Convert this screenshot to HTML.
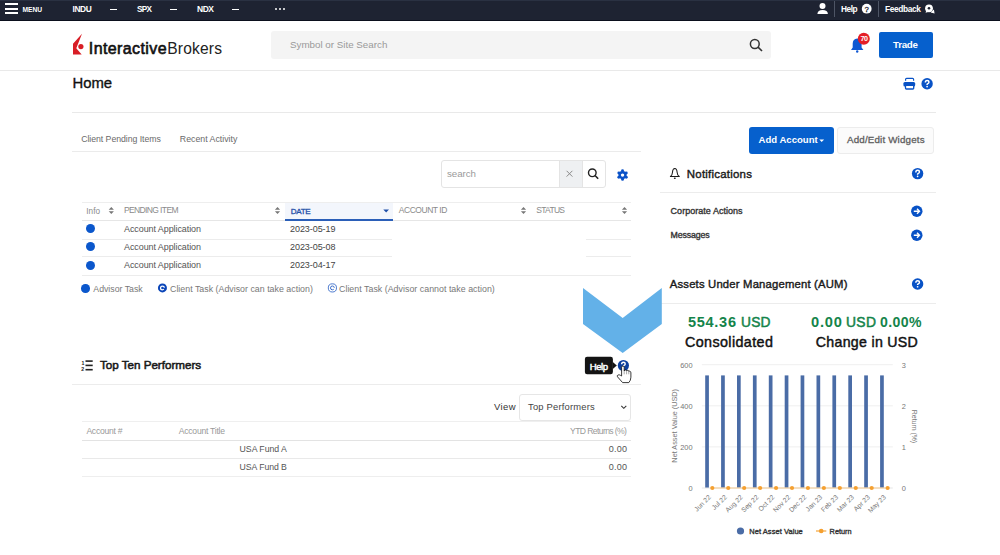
<!DOCTYPE html>
<html><head><meta charset="utf-8"><style>
html,body{margin:0;padding:0;background:#fff;width:1000px;height:555px;overflow:hidden;position:relative;font-family:"Liberation Sans",sans-serif;}
.t{position:absolute;white-space:nowrap;}
svg{position:absolute;overflow:visible;}
</style></head><body>
<div style="position:absolute;left:0px;top:0px;width:1000.00px;height:20.70px;background:#1e2332;border-top:1px solid #2a3142;border-bottom:1px solid #0b0f1d;box-sizing:border-box"></div>
<div style="position:absolute;left:4.5px;top:3.3px;width:13.50px;height:2.00px;background:#fff"></div>
<div style="position:absolute;left:4.5px;top:7.8px;width:13.50px;height:2.00px;background:#fff"></div>
<div style="position:absolute;left:4.5px;top:12.3px;width:13.50px;height:2.00px;background:#fff"></div>
<div class="t" style="top:7px;left:22.50px;font-size:6.70px;line-height:6.70px;letter-spacing:-0.077px;font-weight:700;color:#fff;">MENU</div>
<div class="t" style="top:5px;left:72.50px;font-size:8.39px;line-height:8.39px;letter-spacing:-0.405px;font-weight:700;color:#fff;">INDU</div>
<div style="position:absolute;left:110px;top:8.5px;width:7.00px;height:1.30px;background:#fff"></div>
<div style="position:absolute;left:170px;top:8.5px;width:7.00px;height:1.30px;background:#fff"></div>
<div style="position:absolute;left:232px;top:8.5px;width:7.00px;height:1.30px;background:#fff"></div>
<div class="t" style="top:6px;left:137.00px;font-size:8.21px;line-height:8.21px;letter-spacing:-0.710px;font-weight:700;color:#fff;">SPX</div>
<div class="t" style="top:5px;left:197.00px;font-size:8.46px;line-height:8.46px;letter-spacing:-0.436px;font-weight:700;color:#fff;">NDX</div>
<div style="position:absolute;left:274.5px;top:8px;width:2px;height:2px;border-radius:1px;background:#fff"></div>
<div style="position:absolute;left:278.5px;top:8px;width:2px;height:2px;border-radius:1px;background:#fff"></div>
<div style="position:absolute;left:282.5px;top:8px;width:2px;height:2px;border-radius:1px;background:#fff"></div>
<svg style="left:0;top:0" width="1000" height="20"><circle cx="822.5" cy="6" r="3" fill="#fff"/><path d="M817.4 14.1 Q817.6 10.1 822.6 10.1 Q827.7 10.1 827.9 14.1 Z" fill="#fff"/></svg>
<div style="position:absolute;left:833.5px;top:1px;width:1.50px;height:16.00px;background:#4e5565"></div>
<div class="t" style="top:5px;left:841.00px;font-size:8.30px;line-height:8.30px;letter-spacing:-0.430px;font-weight:700;color:#fff;">Help</div>
<svg style="left:0;top:0" width="1000" height="20"><circle cx="866.7" cy="8.7" r="4.9" fill="#fff"/><text x="866.7" y="11.5" font-family="Liberation Sans" font-weight="400" font-size="7.8" fill="#1e2332" text-anchor="middle" stroke="#1e2332" stroke-width="0.3">?</text></svg>
<div style="position:absolute;left:877.5px;top:1px;width:1.50px;height:16.00px;background:#4e5565"></div>
<div class="t" style="top:5px;left:885.00px;font-size:8.35px;line-height:8.35px;letter-spacing:-0.362px;font-weight:700;color:#fff;">Feedback</div>
<svg style="left:0;top:0" width="1000" height="20"><circle cx="929" cy="8.3" r="3.9" fill="#fff"/><circle cx="929" cy="8.3" r="1.3" fill="#1e2332"/><path d="M926.2 10.6 L925.6 12.8 L928.2 11.9 Z M933.9 9.6 L934.6 13.6 L930.6 12.4 Z" fill="#fff"/></svg>
<div style="position:absolute;left:0px;top:70px;width:1000.00px;height:1.00px;background:#e9e9e9"></div>
<svg style="left:0;top:0" width="300" height="70"><path d="M82 33.7 L73 43.7 L73 54.5 L81.7 54.5 L76.3 48.3 Z" fill="#d81e26"/><circle cx="80.9" cy="46.6" r="2.6" fill="#d81e26"/></svg>
<div class="t" style="top:40px;left:88.80px;font-size:16.02px;line-height:16.02px;letter-spacing:0.391px;font-weight:400;color:#111;-webkit-text-stroke:0.6px #111;">Interactive</div>
<div class="t" style="top:41px;left:167.30px;font-size:15.58px;line-height:15.58px;letter-spacing:0.171px;font-weight:400;color:#222;">Brokers</div>
<div style="position:absolute;left:270.5px;top:31.3px;width:500.10px;height:27.30px;background:#f4f4f4;border-radius:3px"></div>
<div class="t" style="top:40px;left:290.00px;font-size:9.80px;line-height:9.80px;letter-spacing:-0.006px;font-weight:400;color:#9a9a9a;">Symbol or Site Search</div>
<svg style="left:0;top:0" width="1000" height="70"><circle cx="754.8" cy="44" r="4.4" fill="none" stroke="#333" stroke-width="1.5"/><path d="M758 47.2 L762 51" stroke="#333" stroke-width="1.6"/></svg>
<svg style="left:0;top:0" width="1000" height="70"><path d="M851 50 L852.7 47.5 L852.7 43.5 Q852.8 38.8 857.2 38.5 Q861.5 38.8 861.6 43.5 L861.6 47.5 L863.4 50 Z" fill="#0f58d2"/><circle cx="857.2" cy="51.5" r="1.2" fill="#0f58d2"/><circle cx="863.8" cy="38.8" r="6" fill="#e41e26"/><text x="864.1" y="41.4" font-family="Liberation Sans" font-weight="700" font-size="7.2" letter-spacing="-0.3" fill="#fff" text-anchor="middle">70</text></svg>
<div style="position:absolute;left:878.7px;top:32.4px;width:54.00px;height:25.30px;background:#0660cd;border-radius:2px"></div>
<div class="t" style="top:40px;left:893.00px;font-size:9.77px;line-height:9.77px;letter-spacing:-0.265px;font-weight:700;color:#fff;">Trade</div>
<div class="t" style="top:76px;left:72.50px;font-size:14.86px;line-height:14.86px;letter-spacing:-0.046px;font-weight:400;color:#111;-webkit-text-stroke:0.35px #111;">Home</div>
<svg style="left:0;top:0" width="1000" height="120"><g fill="#0852c6" stroke="#0852c6"><path d="M905.6 80.8 L905.6 79.3 Q905.6 78.3 906.6 78.3 L912.6 78.3 Q913.6 78.3 913.6 79.3 L913.6 80.8" fill="none" stroke-width="1.15"/><rect x="903.4" y="81.9" width="11.8" height="4.7" rx="1.5" stroke="none"/><rect x="905.5" y="85.3" width="8.2" height="3.7" rx="0.8" fill="#fff" stroke-width="1.3"/></g></svg>
<svg style="left:0;top:0" width="1000" height="555"><circle cx="927.1" cy="83.8" r="5.7" fill="#0852c6"/><g transform="translate(927.1,83.8) scale(1.000)"><path d="M-1.75 -1.2 Q-1.75 -3.3 0 -3.3 Q1.85 -3.3 1.85 -1.55 Q1.85 -0.5 0.4 0.05 Q0 0.25 0 0.8 L0 1.1" fill="none" stroke="#fff" stroke-width="1.45"/><circle cx="0" cy="2.75" r="0.85" fill="#fff"/></g></svg>
<div style="position:absolute;left:72px;top:111.5px;width:864.00px;height:1.00px;background:#e9e9e9"></div>
<div class="t" style="top:135px;left:81.20px;font-size:8.72px;line-height:8.72px;letter-spacing:-0.040px;font-weight:400;color:#6a6a6a;">Client Pending Items</div>
<div class="t" style="top:135px;left:179.80px;font-size:8.79px;line-height:8.79px;letter-spacing:-0.003px;font-weight:400;color:#6a6a6a;">Recent Activity</div>
<div style="position:absolute;left:72px;top:150.5px;width:569.00px;height:1.00px;background:#ebebeb"></div>
<div style="position:absolute;left:440.5px;top:160px;width:165.90px;height:27.80px;border:1px solid #e4e4e4;border-radius:3px;box-sizing:border-box;background:#fff"></div>
<div style="position:absolute;left:558.5px;top:160.5px;width:22.50px;height:26.80px;background:#eef0f2;border-left:1px solid #e4e4e4;border-right:1px solid #e4e4e4"></div>
<div class="t" style="top:169px;left:447.00px;font-size:9.74px;line-height:9.74px;letter-spacing:-0.049px;font-weight:400;color:#9a9a9a;">search</div>
<svg style="left:0;top:0" width="1000" height="555"><path d="M566.6 170.8 L572.4 176.6 M572.4 170.8 L566.6 176.6" stroke="#8a8a8a" stroke-width="1"/><circle cx="592.3" cy="172.8" r="3.8" fill="none" stroke="#222" stroke-width="1.4"/><path d="M595 175.5 L598.2 178.8" stroke="#222" stroke-width="1.6"/></svg>
<svg style="left:0;top:0" width="1000" height="555"><g transform="translate(622.55,175.1)" fill="#0a52c8"><circle r="4.1"/><circle cx="0.00" cy="-4.30" r="1.45"/><circle cx="3.72" cy="-2.15" r="1.45"/><circle cx="3.72" cy="2.15" r="1.45"/><circle cx="0.00" cy="4.30" r="1.45"/><circle cx="-3.72" cy="2.15" r="1.45"/><circle cx="-3.72" cy="-2.15" r="1.45"/><circle r="1.7" fill="#fff"/></g></svg>
<div style="position:absolute;left:81.75px;top:202px;width:549.25px;height:1.00px;background:#eeeeee"></div>
<div style="position:absolute;left:285.4px;top:202.5px;width:108.00px;height:17.50px;background:#f3f6fc"></div>
<div style="position:absolute;left:81.75px;top:219.5px;width:549.25px;height:1.00px;background:#e6e6e6"></div>
<div style="position:absolute;left:285.4px;top:219px;width:108.00px;height:2.00px;background:#2b5fb8"></div>
<div class="t" style="top:208px;left:86.30px;font-size:8.20px;line-height:8.20px;letter-spacing:0.009px;font-weight:400;color:#8a8a8a;">Info</div>
<div class="t" style="top:206px;left:124.00px;font-size:8.50px;line-height:8.50px;letter-spacing:-0.626px;font-weight:400;color:#8a8a8a;">PENDING ITEM</div>
<div class="t" style="top:208px;left:290.80px;font-size:8.10px;line-height:8.10px;letter-spacing:-0.400px;font-weight:400;color:#1f4fa8;-webkit-text-stroke:0.3px #1f4fa8;">DATE</div>
<div class="t" style="top:206px;left:398.80px;font-size:8.50px;line-height:8.50px;letter-spacing:-0.460px;font-weight:400;color:#8a8a8a;">ACCOUNT ID</div>
<div class="t" style="top:206px;left:536.30px;font-size:8.50px;line-height:8.50px;letter-spacing:-0.716px;font-weight:400;color:#8a8a8a;">STATUS</div>
<svg style="left:0;top:0" width="1000" height="555"><path d="M108.7 209.7 L111.3 206.9 L113.89999999999999 209.7 Z M108.7 211.3 L111.3 214.1 L113.89999999999999 211.3 Z" fill="#777"/></svg>
<svg style="left:0;top:0" width="1000" height="555"><path d="M274.9 209.7 L277.5 206.9 L280.1 209.7 Z M274.9 211.3 L277.5 214.1 L280.1 211.3 Z" fill="#777"/></svg>
<svg style="left:0;top:0" width="1000" height="555"><path d="M520.9 209.7 L523.5 206.9 L526.1 209.7 Z M520.9 211.3 L523.5 214.1 L526.1 211.3 Z" fill="#777"/></svg>
<svg style="left:0;top:0" width="1000" height="555"><path d="M621.9 209.7 L624.5 206.9 L627.1 209.7 Z M621.9 211.3 L624.5 214.1 L627.1 211.3 Z" fill="#777"/></svg>
<svg style="left:0;top:0" width="1000" height="555"><path d="M383.3 209.6 L389 209.6 L386.15 212.6 Z" fill="#1f4fa8"/></svg>
<div style="position:absolute;left:86.25px;top:224.25px;width:9px;height:9px;border-radius:50%;background:#0b57cc"></div>
<div class="t" style="top:225px;left:124.00px;font-size:8.97px;line-height:8.97px;letter-spacing:-0.071px;font-weight:400;color:#555;">Account Application</div>
<div class="t" style="top:225px;left:290.00px;font-size:9.00px;line-height:9.00px;letter-spacing:-0.059px;font-weight:400;color:#444;">2023-05-19</div>
<div style="position:absolute;left:81.75px;top:238.5px;width:310.25px;height:1.00px;background:#ececec"></div>
<div style="position:absolute;left:586px;top:238.5px;width:45.00px;height:1.00px;background:#ececec"></div>
<div style="position:absolute;left:86.25px;top:242.1px;width:9px;height:9px;border-radius:50%;background:#0b57cc"></div>
<div class="t" style="top:243px;left:124.00px;font-size:8.97px;line-height:8.97px;letter-spacing:-0.071px;font-weight:400;color:#555;">Account Application</div>
<div class="t" style="top:243px;left:290.00px;font-size:9.00px;line-height:9.00px;letter-spacing:-0.059px;font-weight:400;color:#444;">2023-05-08</div>
<div style="position:absolute;left:81.75px;top:256px;width:310.25px;height:1.00px;background:#ececec"></div>
<div style="position:absolute;left:586px;top:256px;width:45.00px;height:1.00px;background:#ececec"></div>
<div style="position:absolute;left:86.25px;top:260.5px;width:9px;height:9px;border-radius:50%;background:#0b57cc"></div>
<div class="t" style="top:261px;left:124.00px;font-size:8.97px;line-height:8.97px;letter-spacing:-0.071px;font-weight:400;color:#555;">Account Application</div>
<div class="t" style="top:261px;left:290.00px;font-size:9.00px;line-height:9.00px;letter-spacing:-0.059px;font-weight:400;color:#444;">2023-04-17</div>
<div style="position:absolute;left:81.75px;top:274.5px;width:549.25px;height:1.00px;background:#ececec"></div>
<div style="position:absolute;left:81.45px;top:284px;width:8.6px;height:8.6px;border-radius:50%;background:#0b57cc"></div>
<div class="t" style="top:285px;left:93.30px;font-size:8.77px;line-height:8.77px;letter-spacing:-0.016px;font-weight:400;color:#787878;">Advisor Task</div>
<svg style="left:0;top:0" width="1000" height="555"><circle cx="162.45" cy="287.9" r="4.5" fill="#0a45b8"/><circle cx="162.45" cy="287.9" r="1.9" fill="none" stroke="#fff" stroke-width="1.25" stroke-dasharray="9.4 2.54" stroke-dashoffset="-1.27"/><circle cx="332.4" cy="287.9" r="4.1" fill="none" stroke="#3a6cc8" stroke-width="0.9"/><circle cx="332.4" cy="287.9" r="1.9" fill="none" stroke="#3a6cc8" stroke-width="1" stroke-dasharray="9.4 2.54" stroke-dashoffset="-1.27"/></svg>
<div class="t" style="top:285px;left:170.00px;font-size:8.82px;line-height:8.82px;letter-spacing:0.014px;font-weight:400;color:#787878;">Client Task (Advisor can take action)</div>
<div class="t" style="top:285px;left:339.00px;font-size:8.84px;line-height:8.84px;letter-spacing:0.023px;font-weight:400;color:#787878;">Client Task (Advisor cannot take action)</div>
<svg style="left:0;top:0" width="1000" height="555"><g fill="#222"><rect x="85.5" y="360.3" width="7.2" height="1.6"/><rect x="85.5" y="364.6" width="7.2" height="1.6"/><rect x="85.5" y="368.9" width="7.2" height="1.6"/></g><text x="81.4" y="364.6" font-family="Liberation Sans" font-weight="700" font-size="5.2" fill="#222">1</text><text x="81.2" y="370.9" font-family="Liberation Sans" font-weight="700" font-size="5.2" fill="#222">2</text></svg>
<div class="t" style="top:359px;left:100.00px;font-size:11.67px;line-height:11.67px;letter-spacing:-0.025px;font-weight:400;color:#1a1a1a;-webkit-text-stroke:0.55px #1a1a1a;">Top Ten Performers</div>
<div style="position:absolute;left:72px;top:383.5px;width:569.00px;height:1.00px;background:#ececec"></div>
<div class="t" style="top:402px;left:494.00px;font-size:9.51px;line-height:9.51px;letter-spacing:0.377px;font-weight:400;color:#333;">View</div>
<div style="position:absolute;left:519.3px;top:394px;width:111.70px;height:26.70px;border:1px solid #e6e6e6;border-radius:3px;box-sizing:border-box;background:#fff"></div>
<div class="t" style="top:402px;left:528.00px;font-size:9.39px;line-height:9.39px;letter-spacing:0.201px;font-weight:400;color:#444;">Top Performers</div>
<svg style="left:0;top:0" width="1000" height="555"><path d="M621.3 405.8 L623.8 408.3 L626.3 405.8" fill="none" stroke="#333" stroke-width="1.05"/></svg>
<div style="position:absolute;left:81.5px;top:421px;width:549.50px;height:1.00px;background:#efefef"></div>
<div class="t" style="top:427px;left:86.40px;font-size:8.60px;line-height:8.60px;letter-spacing:-0.269px;font-weight:400;color:#999;">Account #</div>
<div class="t" style="top:427px;left:178.80px;font-size:8.60px;line-height:8.60px;letter-spacing:-0.253px;font-weight:400;color:#999;">Account Title</div>
<div class="t" style="top:427px;left:570.00px;font-size:8.60px;line-height:8.60px;letter-spacing:-0.605px;font-weight:400;color:#999;">YTD Returns (%)</div>
<div style="position:absolute;left:81.5px;top:439.7px;width:549.50px;height:1.00px;background:#e3e3e3"></div>
<div class="t" style="top:445px;left:239.60px;font-size:8.74px;line-height:8.74px;letter-spacing:-0.035px;font-weight:400;color:#555;">USA Fund A</div>
<div class="t" style="top:445px;left:608.80px;font-size:9.04px;line-height:9.04px;letter-spacing:0.198px;font-weight:400;color:#555;">0.00</div>
<div style="position:absolute;left:81.5px;top:457.9px;width:549.50px;height:1.00px;background:#e9e9e9"></div>
<div class="t" style="top:463px;left:239.60px;font-size:8.70px;line-height:8.70px;letter-spacing:-0.064px;font-weight:400;color:#555;">USA Fund B</div>
<div class="t" style="top:463px;left:608.80px;font-size:9.04px;line-height:9.04px;letter-spacing:0.198px;font-weight:400;color:#555;">0.00</div>
<div style="position:absolute;left:81.5px;top:476px;width:549.50px;height:1.00px;background:#eeeeee"></div>
<div style="position:absolute;left:749px;top:127px;width:85.20px;height:26.60px;background:#0660cd;border-radius:3px"></div>
<div class="t" style="top:135px;left:758.60px;font-size:9.54px;line-height:9.54px;letter-spacing:0.010px;font-weight:700;color:#fff;">Add Account</div>
<svg style="left:0;top:0" width="1000" height="555"><path d="M819.3 139.6 L824.1 139.6 L821.7 142.1 Z" fill="#fff"/></svg>
<div style="position:absolute;left:837px;top:127px;width:97.40px;height:26.60px;border:1px solid #ececec;border-radius:3px;box-sizing:border-box;background:#fbfbfb"></div>
<div class="t" style="top:135px;left:847.00px;font-size:9.79px;line-height:9.79px;letter-spacing:0.167px;font-weight:400;color:#606060;-webkit-text-stroke:0.3px #606060;">Add/Edit Widgets</div>
<svg style="left:0;top:0" width="1000" height="555"><path d="M670.4 176.5 Q672.3 175.2 672.5 172.2 Q672.7 168.5 674.8 168.4 Q676.9 168.5 677.1 172.2 Q677.3 175.2 679.3 176.5 Z" fill="none" stroke="#1a1a1a" stroke-width="1.05" stroke-linejoin="round"/><ellipse cx="674.8" cy="178.3" rx="1" ry="0.8" fill="#1a1a1a"/></svg>
<div class="t" style="top:169px;left:686.80px;font-size:11.46px;line-height:11.46px;letter-spacing:0.231px;font-weight:400;color:#1a1a1a;-webkit-text-stroke:0.4px #1a1a1a;">Notifications</div>
<svg style="left:0;top:0" width="1000" height="555"><circle cx="917.6" cy="173.6" r="5.7" fill="#0852c6"/><g transform="translate(917.6,173.6) scale(1.000)"><path d="M-1.75 -1.2 Q-1.75 -3.3 0 -3.3 Q1.85 -3.3 1.85 -1.55 Q1.85 -0.5 0.4 0.05 Q0 0.25 0 0.8 L0 1.1" fill="none" stroke="#fff" stroke-width="1.45"/><circle cx="0" cy="2.75" r="0.85" fill="#fff"/></g></svg>
<div style="position:absolute;left:660px;top:192px;width:276.00px;height:1.00px;background:#ececec"></div>
<div class="t" style="top:207px;left:670.60px;font-size:8.99px;line-height:8.99px;letter-spacing:0.033px;font-weight:400;color:#333;-webkit-text-stroke:0.35px #333;">Corporate Actions</div>
<div class="t" style="top:231px;left:670.60px;font-size:8.79px;line-height:8.79px;letter-spacing:-0.123px;font-weight:400;color:#333;-webkit-text-stroke:0.35px #333;">Messages</div>
<svg style="left:0;top:0" width="1000" height="555"><circle cx="916.8" cy="211.2" r="5.7" fill="#0852c6"/><path d="M913.8 211.2 L919.4 211.2 M917.0 208.7 L919.5 211.2 L917.0 213.7" fill="none" stroke="#fff" stroke-width="1.4"/></svg>
<svg style="left:0;top:0" width="1000" height="555"><circle cx="916.8" cy="235.3" r="5.7" fill="#0852c6"/><path d="M913.8 235.3 L919.4 235.3 M917.0 232.8 L919.5 235.3 L917.0 237.8" fill="none" stroke="#fff" stroke-width="1.4"/></svg>
<div class="t" style="top:279px;left:669.80px;font-size:11.31px;line-height:11.31px;letter-spacing:0.177px;font-weight:400;color:#1a1a1a;-webkit-text-stroke:0.4px #1a1a1a;">Assets Under Management (AUM)</div>
<svg style="left:0;top:0" width="1000" height="555"><circle cx="917.6" cy="284" r="5.7" fill="#0852c6"/><g transform="translate(917.6,284) scale(1.000)"><path d="M-1.75 -1.2 Q-1.75 -3.3 0 -3.3 Q1.85 -3.3 1.85 -1.55 Q1.85 -0.5 0.4 0.05 Q0 0.25 0 0.8 L0 1.1" fill="none" stroke="#fff" stroke-width="1.45"/><circle cx="0" cy="2.75" r="0.85" fill="#fff"/></g></svg>
<div style="position:absolute;left:660px;top:302.8px;width:276.00px;height:1.00px;background:#ececec"></div>
<div class="t" style="top:315px;left:688.00px;font-size:14.54px;line-height:14.54px;letter-spacing:0.709px;font-weight:700;color:#14844a;">554.36</div>
<div class="t" style="top:316px;left:741.00px;font-size:13.76px;line-height:13.76px;letter-spacing:0.216px;font-weight:400;color:#14844a;-webkit-text-stroke:0.5px #14844a;">USD</div>
<div class="t" style="top:335px;left:685.00px;font-size:14.34px;line-height:14.34px;letter-spacing:0.390px;font-weight:400;color:#111;-webkit-text-stroke:0.45px #111;">Consolidated</div>
<div class="t" style="top:315px;left:811.00px;font-size:14.64px;line-height:14.64px;letter-spacing:0.830px;font-weight:700;color:#14844a;">0.00</div>
<div class="t" style="top:316px;left:846.00px;font-size:13.87px;line-height:13.87px;letter-spacing:0.350px;font-weight:400;color:#14844a;-webkit-text-stroke:0.5px #14844a;">USD</div>
<div class="t" style="top:315px;left:880.00px;font-size:14.08px;line-height:14.08px;letter-spacing:0.421px;font-weight:700;color:#14844a;">0.00%</div>
<div class="t" style="top:335px;left:815.80px;font-size:14.16px;line-height:14.16px;letter-spacing:0.302px;font-weight:400;color:#111;-webkit-text-stroke:0.45px #111;">Change in USD</div>
<svg style="left:0;top:0" width="1000" height="555"><rect x="701.8" y="364.2" width="191" height="1" fill="#efefef"/><rect x="701.8" y="405.3" width="191" height="1" fill="#efefef"/><rect x="701.8" y="446.4" width="191" height="1" fill="#efefef"/><text x="692.5" y="368.0" font-family="Liberation Sans" font-size="7.4" fill="#777" text-anchor="end">600</text><text x="692.5" y="408.90000000000003" font-family="Liberation Sans" font-size="7.4" fill="#777" text-anchor="end">400</text><text x="692.5" y="449.8" font-family="Liberation Sans" font-size="7.4" fill="#777" text-anchor="end">200</text><text x="692.5" y="490.6" font-family="Liberation Sans" font-size="7.4" fill="#777" text-anchor="end">0</text><text x="901.8" y="368.0" font-family="Liberation Sans" font-size="7.4" fill="#777">3</text><text x="901.8" y="408.90000000000003" font-family="Liberation Sans" font-size="7.4" fill="#777">2</text><text x="901.8" y="449.8" font-family="Liberation Sans" font-size="7.4" fill="#777">1</text><text x="901.8" y="490.6" font-family="Liberation Sans" font-size="7.4" fill="#777">0</text><text transform="translate(677,425.8) rotate(-90)" font-family="Liberation Sans" font-size="7.3" fill="#777" text-anchor="middle">Net Asset Value (USD)</text><text transform="translate(911.5,426.5) rotate(90)" font-family="Liberation Sans" font-size="6.9" fill="#777" text-anchor="middle">Return (%)</text><rect x="705.20" y="375.4" width="3.7" height="112.6" fill="#4a6ca6"/><rect x="721.10" y="375.4" width="3.7" height="112.6" fill="#4a6ca6"/><rect x="737.00" y="375.4" width="3.7" height="112.6" fill="#4a6ca6"/><rect x="752.90" y="375.4" width="3.7" height="112.6" fill="#4a6ca6"/><rect x="768.80" y="375.4" width="3.7" height="112.6" fill="#4a6ca6"/><rect x="784.70" y="375.4" width="3.7" height="112.6" fill="#4a6ca6"/><rect x="800.60" y="375.4" width="3.7" height="112.6" fill="#4a6ca6"/><rect x="816.50" y="375.4" width="3.7" height="112.6" fill="#4a6ca6"/><rect x="832.40" y="375.4" width="3.7" height="112.6" fill="#4a6ca6"/><rect x="848.30" y="375.4" width="3.7" height="112.6" fill="#4a6ca6"/><rect x="864.20" y="375.4" width="3.7" height="112.6" fill="#4a6ca6"/><rect x="880.10" y="375.4" width="3.7" height="112.6" fill="#4a6ca6"/><rect x="701.8" y="487.5" width="191" height="1" fill="#e6e6e6"/><path d="M712.3 488 L887.6 488" stroke="#f6c27a" stroke-width="0.8"/><circle cx="712.30" cy="488" r="2.1" fill="#f5a030"/><circle cx="728.24" cy="488" r="2.1" fill="#f5a030"/><circle cx="744.18" cy="488" r="2.1" fill="#f5a030"/><circle cx="760.12" cy="488" r="2.1" fill="#f5a030"/><circle cx="776.06" cy="488" r="2.1" fill="#f5a030"/><circle cx="792.00" cy="488" r="2.1" fill="#f5a030"/><circle cx="807.94" cy="488" r="2.1" fill="#f5a030"/><circle cx="823.88" cy="488" r="2.1" fill="#f5a030"/><circle cx="839.82" cy="488" r="2.1" fill="#f5a030"/><circle cx="855.76" cy="488" r="2.1" fill="#f5a030"/><circle cx="871.70" cy="488" r="2.1" fill="#f5a030"/><circle cx="887.64" cy="488" r="2.1" fill="#f5a030"/><text transform="translate(711.40,497.6) rotate(-45)" font-family="Liberation Sans" font-size="6.75" fill="#777" text-anchor="end">Jun 22</text><text transform="translate(727.30,497.6) rotate(-45)" font-family="Liberation Sans" font-size="6.75" fill="#777" text-anchor="end">Jul 22</text><text transform="translate(743.20,497.6) rotate(-45)" font-family="Liberation Sans" font-size="6.75" fill="#777" text-anchor="end">Aug 22</text><text transform="translate(759.10,497.6) rotate(-45)" font-family="Liberation Sans" font-size="6.75" fill="#777" text-anchor="end">Sep 22</text><text transform="translate(775.00,497.6) rotate(-45)" font-family="Liberation Sans" font-size="6.75" fill="#777" text-anchor="end">Oct 22</text><text transform="translate(790.90,497.6) rotate(-45)" font-family="Liberation Sans" font-size="6.75" fill="#777" text-anchor="end">Nov 22</text><text transform="translate(806.80,497.6) rotate(-45)" font-family="Liberation Sans" font-size="6.75" fill="#777" text-anchor="end">Dec 22</text><text transform="translate(822.70,497.6) rotate(-45)" font-family="Liberation Sans" font-size="6.75" fill="#777" text-anchor="end">Jan 23</text><text transform="translate(838.60,497.6) rotate(-45)" font-family="Liberation Sans" font-size="6.75" fill="#777" text-anchor="end">Feb 23</text><text transform="translate(854.50,497.6) rotate(-45)" font-family="Liberation Sans" font-size="6.75" fill="#777" text-anchor="end">Mar 23</text><text transform="translate(870.40,497.6) rotate(-45)" font-family="Liberation Sans" font-size="6.75" fill="#777" text-anchor="end">Apr 23</text><text transform="translate(886.30,497.6) rotate(-45)" font-family="Liberation Sans" font-size="6.75" fill="#777" text-anchor="end">May 23</text><circle cx="740.5" cy="531" r="3.6" fill="#4a6ca6"/><path d="M816 531 L826.3 531" stroke="#f3a53a" stroke-width="1.2"/><circle cx="821.2" cy="531" r="2.3" fill="#f5a030"/></svg>
<div class="t" style="top:528px;left:749.30px;font-size:7.46px;line-height:7.46px;letter-spacing:0.069px;font-weight:400;color:#333;-webkit-text-stroke:0.35px #333;">Net Asset Value</div>
<div class="t" style="top:528px;left:829.60px;font-size:7.33px;line-height:7.33px;letter-spacing:-0.002px;font-weight:400;color:#333;-webkit-text-stroke:0.35px #333;">Return</div>
<svg style="left:0;top:0" width="1000" height="555"><path d="M583 288 L622.7 318 L661.8 288 L661.8 324 L622.7 353 L583 324 Z" fill="#63b1e8"/></svg>
<svg style="left:0;top:0" width="1000" height="555"><rect x="584.9" y="356.8" width="28" height="17.4" rx="2.2" fill="#141414"/><path d="M612.8 362 L616.8 365.5 L612.8 369 Z" fill="#141414"/></svg>
<div class="t" style="top:362px;left:589.70px;font-size:9.58px;line-height:9.58px;letter-spacing:-0.437px;font-weight:400;color:#fff;-webkit-text-stroke:0.45px #fff;">Help</div>
<svg style="left:0;top:0" width="1000" height="555"><circle cx="623.4" cy="365.5" r="5.6" fill="#0c3f9e"/><g transform="translate(623.4,365.5) scale(0.982)"><path d="M-1.75 -1.2 Q-1.75 -3.3 0 -3.3 Q1.85 -3.3 1.85 -1.55 Q1.85 -0.5 0.4 0.05 Q0 0.25 0 0.8 L0 1.1" fill="none" stroke="#fff" stroke-width="1.45"/><circle cx="0" cy="2.75" r="0.85" fill="#fff"/></g></svg>
<svg style="left:0;top:0" width="1000" height="555"><path d="M621.6 376 L621.6 367.3 Q621.6 366 622.9 366 Q624.2 366 624.2 367.3 L624.2 371 Q624.4 369.9 625.4 369.9 Q626.5 369.9 626.6 371 Q626.8 370.3 627.7 370.3 Q628.7 370.3 628.8 371.4 Q629.1 371 629.9 371.2 Q630.9 371.5 630.9 372.8 L630.9 377.2 Q630.8 380.6 628.8 382.6 L622.6 382.6 L617.5 376.8 Q616.8 375.6 617.9 375 Q619.2 374.5 620.4 375.3 Z" fill="#fff" stroke="#161616" stroke-width="0.85" stroke-linejoin="round"/><path d="M624.2 371 L624.2 374.3 M626.6 371 L626.6 374.3 M628.8 371.4 L628.8 374.3" stroke="#555" stroke-width="0.5"/></svg>
</body></html>
